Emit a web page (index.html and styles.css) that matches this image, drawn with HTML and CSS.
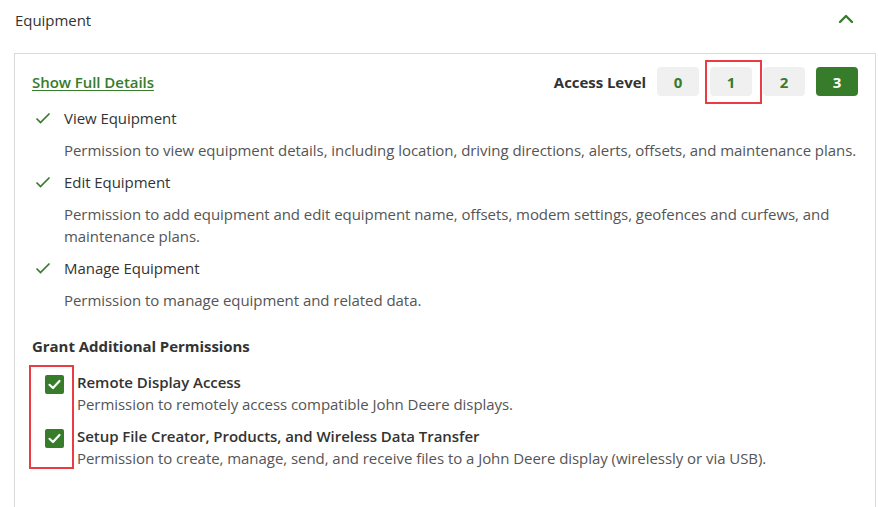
FILE: index.html
```html
<!DOCTYPE html>
<html lang="en">
<head>
<meta charset="utf-8">
<title>Equipment</title>
<link rel="stylesheet" href="styles.css">
</head>
<body>
<div class="page">
  <div class="section-header">
    <span class="section-title">Equipment</span>
    <svg class="chevron" width="16" height="10" viewBox="0 0 16 10"><path d="M2 8 L8 2 L14 8" fill="none" stroke="#367c2b" stroke-width="2.4" stroke-linecap="round" stroke-linejoin="round"/></svg>
  </div>
  <div class="panel">
    <div class="top-row">
      <a class="details-link" href="#">Show Full Details</a>
      <div class="access">
        <span class="access-label">Access Level</span>
        <div class="levels">
          <span class="level">0</span>
          <span class="level level-marked">1<span class="annot annot-level"></span></span>
          <span class="level">2</span>
          <span class="level level-active">3</span>
        </div>
      </div>
    </div>

    <ul class="perm-list">
      <li class="perm">
        <div class="perm-title"><svg class="tick" width="16" height="12" viewBox="0 0 16 12"><path d="M1.5 6.5 L5.5 10.5 L14.5 1.5" fill="none" stroke="#367c2b" stroke-width="1.7"/></svg>View Equipment</div>
        <p class="perm-desc">Permission to view equipment details, including location, driving directions, alerts, offsets, and maintenance plans.</p>
      </li>
      <li class="perm">
        <div class="perm-title"><svg class="tick" width="16" height="12" viewBox="0 0 16 12"><path d="M1.5 6.5 L5.5 10.5 L14.5 1.5" fill="none" stroke="#367c2b" stroke-width="1.7"/></svg>Edit Equipment</div>
        <p class="perm-desc">Permission to add equipment and edit equipment name, offsets, modem settings, geofences and curfews, and maintenance plans.</p>
      </li>
      <li class="perm">
        <div class="perm-title"><svg class="tick" width="16" height="12" viewBox="0 0 16 12"><path d="M1.5 6.5 L5.5 10.5 L14.5 1.5" fill="none" stroke="#367c2b" stroke-width="1.7"/></svg>Manage Equipment</div>
        <p class="perm-desc">Permission to manage equipment and related data.</p>
      </li>
    </ul>

    <h3 class="grant-title">Grant Additional Permissions</h3>
    <div class="grant-list">
      <span class="annot annot-checks"></span>
      <label class="grant">
        <span class="checkbox"><svg width="19" height="19" viewBox="0 0 19 19"><path d="M4.5 9.8 L8 13 L14.5 6" fill="none" stroke="#fff" stroke-width="2.2" stroke-linecap="round" stroke-linejoin="round"/></svg></span>
        <span class="grant-text">
          <span class="grant-name">Remote Display Access</span>
          <span class="grant-desc">Permission to remotely access compatible John Deere displays.</span>
        </span>
      </label>
      <label class="grant">
        <span class="checkbox"><svg width="19" height="19" viewBox="0 0 19 19"><path d="M4.5 9.8 L8 13 L14.5 6" fill="none" stroke="#fff" stroke-width="2.2" stroke-linecap="round" stroke-linejoin="round"/></svg></span>
        <span class="grant-text">
          <span class="grant-name">Setup File Creator, Products, and Wireless Data Transfer</span>
          <span class="grant-desc">Permission to create, manage, send, and receive files to a John Deere display (wirelessly or via USB).</span>
        </span>
      </label>
    </div>
  </div>
</div>
</body>
</html>
```

FILE: styles.css
```css
* { box-sizing: border-box; }

html, body {
  margin: 0;
  padding: 0;
  background: #fff;
  overflow: hidden;
}

body {
  font-family: "Open Sans", "Noto Sans", Arial, sans-serif;
  font-size: 15px;
  color: #333;
  letter-spacing: -0.05px;
}

.page {
  padding: 0 2px 0 14px;
}

.section-header {
  height: 53px;
  display: flex;
  align-items: flex-start;
  justify-content: space-between;
  padding: 9px 22px 0 1px;
}

.section-title {
  font-size: 15px;
  line-height: 22px;
  color: #333;
}

.chevron {
  margin-top: 5px;
}

.panel {
  border: 1px solid #dadada;
  padding: 13px 17px 0 17px;
  min-height: 520px;
}

.top-row {
  display: flex;
  justify-content: space-between;
  align-items: center;
  height: 29px;
}

.details-link {
  color: #367c2b;
  font-weight: 600;
  text-decoration: underline;
  text-underline-offset: 2px;
  line-height: 22px;
}

.access {
  display: flex;
  align-items: center;
  gap: 11px;
}

.access-label {
  font-weight: 700;
  color: #333;
}

.levels {
  display: flex;
  gap: 11px;
}

.level {
  position: relative;
  width: 42px;
  height: 29px;
  border-radius: 4px;
  background: #f0f0f0;
  color: #367c2b;
  font-weight: 700;
  display: flex;
  align-items: center;
  justify-content: center;
}

.level-active {
  background: #367c2b;
  color: #fff;
}

.annot {
  position: absolute;
  border: 2px solid #ea3c43;
  pointer-events: none;
}

.annot-level {
  left: -5px;
  top: -7px;
  width: 57px;
  height: 44px;
}

.perm-list {
  list-style: none;
  margin: 11px 0 0 0;
  padding: 0;
}

.perm-title {
  position: relative;
  line-height: 22px;
  padding-left: 32px;
  color: #333;
  margin-bottom: 10px;
}

.tick {
  position: absolute;
  left: 3px;
  top: 5px;
}

.perm-desc {
  margin: 0 -4px 10px 0;
  padding-left: 32px;
  line-height: 22px;
  color: #555;
}

.grant-title {
  margin: 24px 0 0 0;
  font-size: 15px;
  line-height: 22px;
  font-weight: 700;
  color: #333;
}

.grant-list {
  position: relative;
  margin-top: 14px;
  display: flex;
  flex-direction: column;
  gap: 10px;
}

.annot-checks {
  left: -3px;
  top: -6px;
  width: 45px;
  height: 104px;
}

.grant {
  display: flex;
  align-items: flex-start;
  padding-left: 13px;
}

.checkbox {
  width: 19px;
  height: 19px;
  margin-top: 4px;
  border-radius: 2px;
  background: #367c2b;
  display: flex;
  flex: none;
}

.grant-text {
  display: flex;
  flex-direction: column;
  margin-left: 13px;
}

.grant-name {
  font-weight: 600;
  line-height: 22px;
  color: #333;
}

.grant-desc {
  line-height: 22px;
  color: #555;
}
```
